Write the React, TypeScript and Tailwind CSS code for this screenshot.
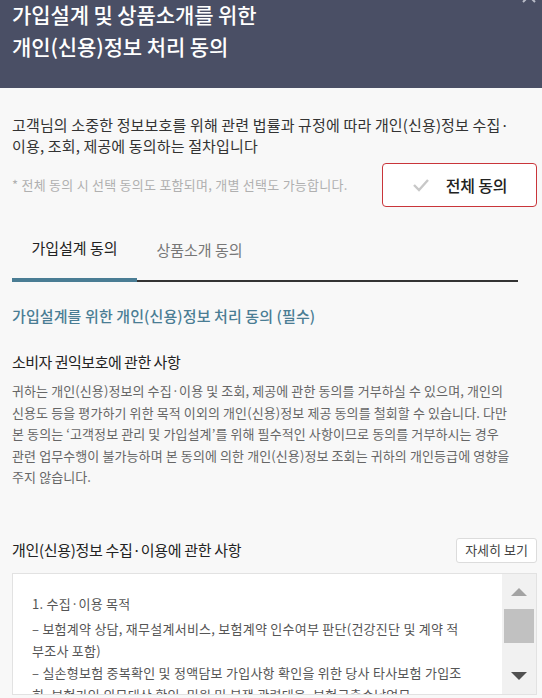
import React from 'react';

const font = { fontFamily: '"Noto Sans CJK KR", "Noto Sans", sans-serif' };

export default function App() {
  const [tab, setTab] = React.useState(0);

  return (
    <div className="w-[542px] h-[698px] overflow-hidden bg-[#f8f8f8]" style={font}>
      {/* header */}
      <div className="relative h-[90px] bg-[#4a4f65] px-3 text-white">
        <h1 className="-mt-[2px] text-[21px] leading-[32px] font-medium tracking-[-0.1px]">
          가입설계 및 상품소개를 위한
          <br />
          개인(신용)정보 처리 동의
        </h1>
        <svg className="absolute right-[5px] -top-[10px] h-[16px] w-[16px]" viewBox="0 0 16 16" fill="none" stroke="#b9bcc8" strokeWidth="2">
          <path d="M2 2l12 12M14 2L2 14" />
        </svg>
      </div>

      {/* intro */}
      <div className="pl-3 pr-[5px] pt-[26px]">
        <p className="text-[15px] leading-[21px] text-[#333] tracking-[0.15px]">
          고객님의 소중한 정보보호를 위해 관련 법률과 규정에 따라 개인(신용)정보 수집·
          <br />
          이용, 조회, 제공에 동의하는 절차입니다
        </p>
        <div className="mt-[7px] flex items-center justify-between">
          <span className="text-[13px] text-[#b0b0b0] tracking-[0.25px]">
            * 전체 동의 시 선택 동의도 포함되며, 개별 선택도 가능합니다.
          </span>
          <button className="flex h-[44px] w-[155px] items-center justify-center gap-[16px] rounded-[4px] border border-[#c9353a] bg-white">
            <svg width="18" height="14" viewBox="0 0 18 14" fill="none" stroke="#c8c8c8" strokeWidth="2.4">
              <path d="M2 7l5 5L16 2" />
            </svg>
            <span className="text-[16px] font-medium text-[#222] tracking-[-0.2px]">전체 동의</span>
          </button>
        </div>
      </div>

      {/* tabs */}
      <div className="ml-3 mr-[24px] mt-[15px] flex border-b-2 border-[#333]">
        {['가입설계 동의', '상품소개 동의'].map((t, i) => (
          <button
            key={t}
            onClick={() => setTab(i)}
            className={`-mb-[2px] h-[60px] w-[125px] pb-[4px] text-center text-[15px] ${
              tab === i ? 'border-b-[4px] border-[#4a7d94] text-[#222]' : 'text-[#777]'
            }`}
          >
            {t}
          </button>
        ))}
      </div>

      {/* content */}
      <div className="pl-3 pr-[5px]">
        <h2 className="mt-[23px] text-[15px] leading-[22px] font-medium text-[#4a7d94] tracking-[0.1px]">
          가입설계를 위한 개인(신용)정보 처리 동의 (필수)
        </h2>

        <h3 className="mt-[24px] text-[15px] leading-[22px] text-[#222] tracking-[-0.5px]">소비자 권익보호에 관한 사항</h3>
        <p className="mt-[7px] text-[13px] leading-[21.5px] text-[#666] tracking-[0.1px]">
          귀하는 개인(신용)정보의 수집·이용 및 조회, 제공에 관한 동의를 거부하실 수 있으며, 개인의
          <br />
          신용도 등을 평가하기 위한 목적 이외의 개인(신용)정보 제공 동의를 철회할 수 있습니다. 다만
          <br />
          본 동의는 ‘고객정보 관리 및 가입설계’를 위해 필수적인 사항이므로 동의를 거부하시는 경우
          <br />
          관련 업무수행이 불가능하며 본 동의에 의한 개인(신용)정보 조회는 귀하의 개인등급에 영향을
          <br />
          주지 않습니다.
        </p>

        <div className="mt-[50px] flex items-center justify-between">
          <span className="text-[15px] text-[#222] tracking-[-0.3px]">개인(신용)정보 수집·이용에 관한 사항</span>
          <button className="h-[25px] w-[81px] rounded-[3px] border border-[#dcdcdc] bg-white text-[13px] text-[#444]">
            자세히 보기
          </button>
        </div>

        <div className="mt-[10px] flex h-[122px] overflow-hidden border border-[#e2e2e2] bg-white">
          <div className="flex-1 overflow-hidden pl-[19px] pt-[19px] text-[13px] leading-[22px] text-[#555] tracking-[0.25px]">
            <p>1. 수집·이용 목적</p>
            <p className="mt-[3px]">
              – 보험계약 상담, 재무설계서비스, 보험계약 인수여부 판단(건강진단 및 계약 적
              <br />
              부조사 포함)
            </p>
            <p>
              – 실손형보험 중복확인 및 정액담보 가입사항 확인을 위한 당사 타사보험 가입조
              <br />
              회, 보험가입 의무대상 확인, 민원 및 분쟁 관련대응, 보험금출수납업무
            </p>
          </div>
          <div className="flex w-[34px] flex-col items-center bg-[#f1f1f1] pt-[14px] pb-[14px]">
            <svg width="16" height="8" viewBox="0 0 16 8">
              <path d="M0 8L8 0l8 8z" fill="#a3a3a3" />
            </svg>
            <div className="mt-[13px] h-[34px] w-[30px] bg-[#c1c1c1]" />
            <div className="flex-1" />
            <svg width="16" height="8" viewBox="0 0 16 8">
              <path d="M0 0h16L8 8z" fill="#505050" />
            </svg>
          </div>
        </div>
      </div>
    </div>
  );
}
